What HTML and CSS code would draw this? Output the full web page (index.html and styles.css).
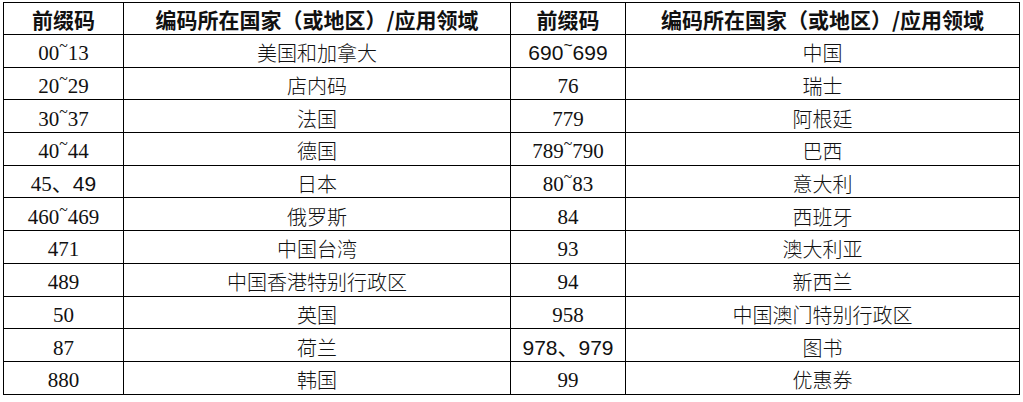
FILE: index.html
```html
<!DOCTYPE html>
<html lang="zh-CN">
<head>
<meta charset="utf-8">
<title>前缀码</title>
<link rel="stylesheet" href="styles.css">
</head>
<body>
<table class="codes">
  <colgroup>
    <col class="c-code">
    <col class="c-area">
    <col class="c-code2">
    <col class="c-area2">
  </colgroup>
  <thead>
    <tr>
      <th>前缀码</th>
      <th>编码所在国家（或地区）/应用领域</th>
      <th>前缀码</th>
      <th>编码所在国家（或地区）/应用领域</th>
    </tr>
  </thead>
  <tbody>
    <tr><td>00<span class="tilde">~</span>13</td><td class="zh">美国和加拿大</td><td class="sans">690<span class="tilde">~</span>699</td><td class="zh">中国</td></tr>
    <tr><td>20<span class="tilde">~</span>29</td><td class="zh">店内码</td><td>76</td><td class="zh">瑞士</td></tr>
    <tr><td>30<span class="tilde">~</span>37</td><td class="zh">法国</td><td>779</td><td class="zh">阿根廷</td></tr>
    <tr><td>40<span class="tilde">~</span>44</td><td class="zh">德国</td><td>789<span class="tilde">~</span>790</td><td class="zh">巴西</td></tr>
    <tr><td>45、<span class="sans">49</span></td><td class="zh">日本</td><td>80<span class="tilde">~</span>83</td><td class="zh">意大利</td></tr>
    <tr><td>460<span class="tilde">~</span>469</td><td class="zh">俄罗斯</td><td>84</td><td class="zh">西班牙</td></tr>
    <tr><td>471</td><td class="zh">中国台湾</td><td>93</td><td class="zh">澳大利亚</td></tr>
    <tr><td>489</td><td class="zh">中国香港特别行政区</td><td>94</td><td class="zh">新西兰</td></tr>
    <tr><td>50</td><td class="zh">英国</td><td>958</td><td class="zh">中国澳门特别行政区</td></tr>
    <tr><td>87</td><td class="zh">荷兰</td><td class="sans">978、979</td><td class="zh">图书</td></tr>
    <tr><td>880</td><td class="zh">韩国</td><td>99</td><td class="zh">优惠券</td></tr>
  </tbody>
</table>
</body>
</html>
```
FILE: styles.css
```css
html, body {
  background: #fff;
}
body {
  margin: 2px 0 0 3px;
}
.codes {
  border-collapse: collapse;
  table-layout: fixed;
  width: 1016px;
  color: #111;
  font-family: "Liberation Serif", "Noto Sans CJK SC", serif;
  font-size: 21px;
}
.c-code { width: 120px; }
.c-area { width: 387px; }
.c-code2 { width: 115px; }
.c-area2 { width: 394px; }
.codes thead tr { height: 32px; }
.codes tbody tr { height: 32.7px; }
.codes th,
.codes td {
  border: 1px solid #000;
  padding: 0;
  text-align: center;
  vertical-align: middle;
  line-height: 22px;
  white-space: nowrap;
}
.codes th {
  font-family: "Noto Sans CJK SC", sans-serif;
  font-weight: 700;
  font-size: 21px;
}
.codes td {
  padding-top: 5px;
}
.codes .zh {
  font-family: "Noto Sans CJK SC", sans-serif;
  font-weight: 300;
  font-size: 20px;
}
.sans {
  font-family: "Liberation Sans", "Noto Sans CJK SC", sans-serif;
}
.tilde {
  vertical-align: 0.6em;
  line-height: 0;
  font-size: 0.75em;
}
```
